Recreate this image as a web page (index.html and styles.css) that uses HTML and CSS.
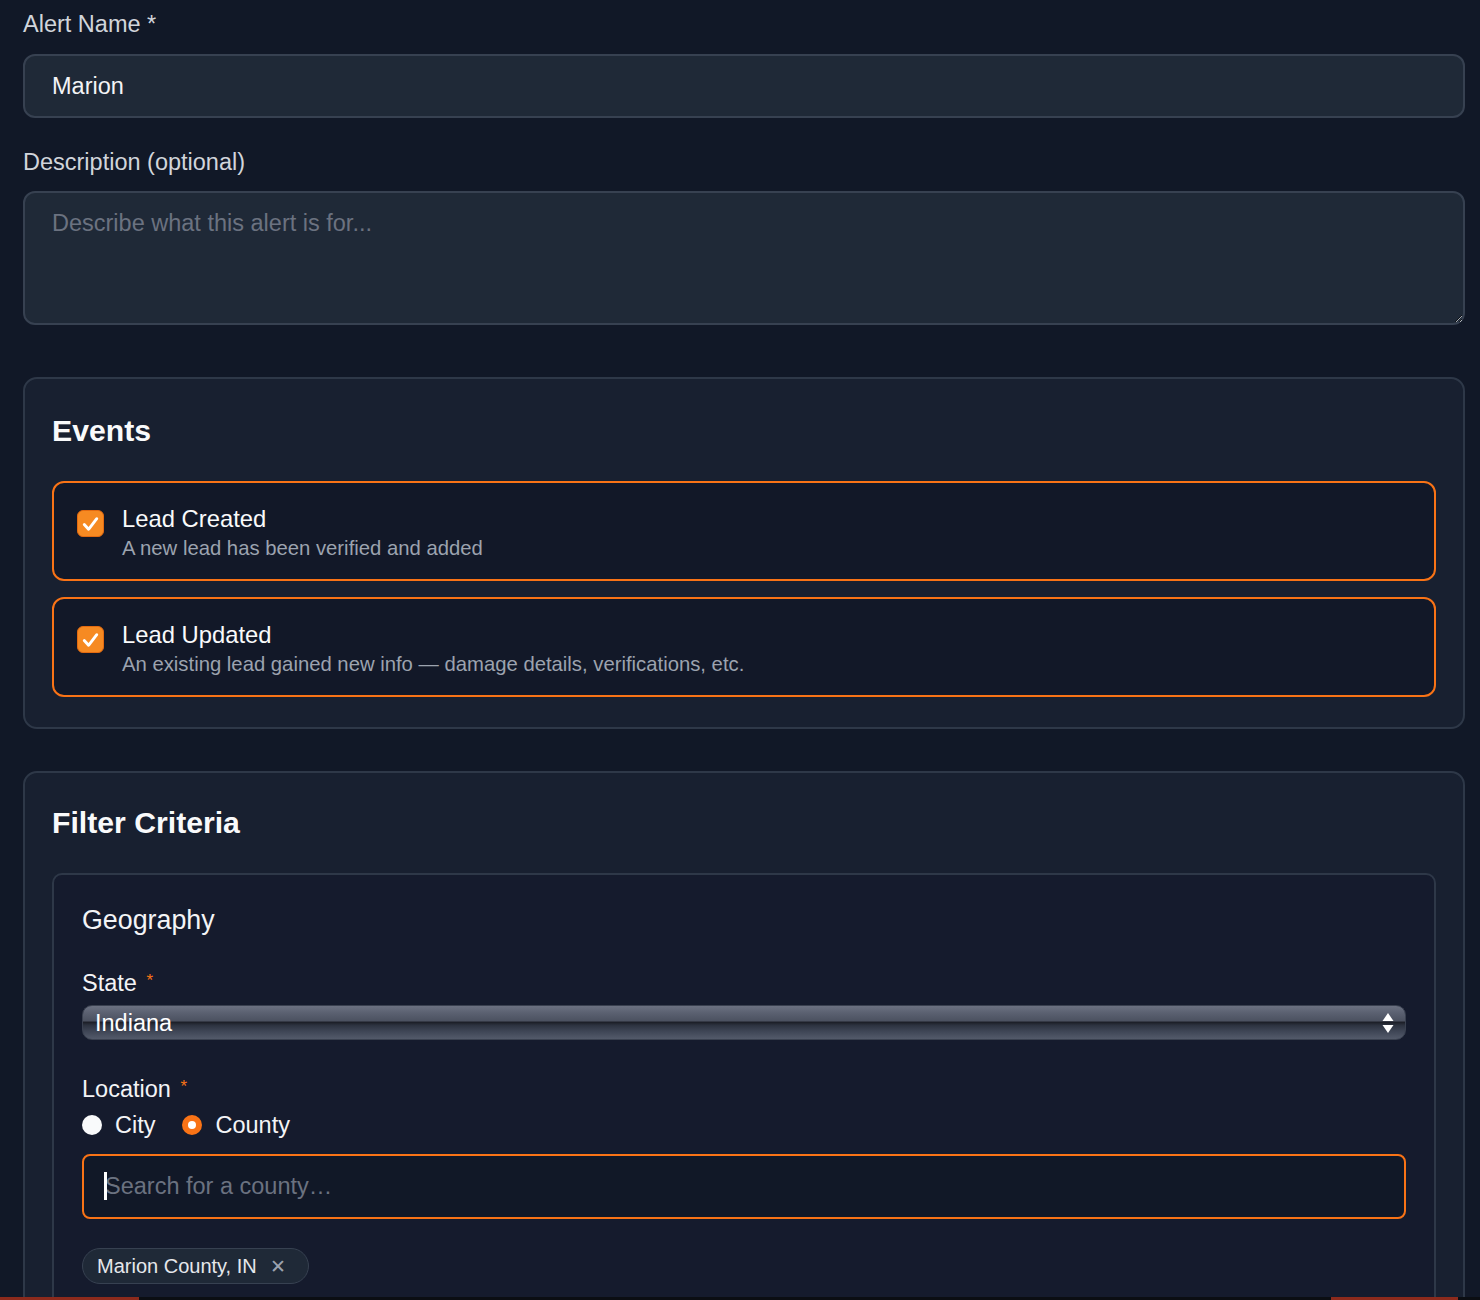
FILE: index.html
```html
<!doctype html>
<html lang="en">
<head>
<meta charset="UTF-8">
<meta name="viewport" content="width=device-width, initial-scale=1.0">
<title>Edit Alert</title>
<link rel="stylesheet" href="styles.css">
</head>
<body>
<form class="alertForm">
  <label class="fieldLabel" for="alertName">Alert Name *</label>
  <input id="alertName" class="textInput" type="text" value="Marion">

  <label class="fieldLabel descLabel" for="alertDesc">Description (optional)</label>
  <textarea id="alertDesc" class="textArea" placeholder="Describe what this alert is for..."></textarea>

  <section class="panel events">
    <h2 class="panelTitle">Events</h2>
    <div class="eventList">
      <label class="eventCard">
        <span class="checkBox"><svg viewBox="0 0 26 26" width="26" height="26"><path d="M6.5 13.5 L11 18.5 L19.5 7.5" fill="none" stroke="#fff" stroke-width="3" stroke-linecap="round" stroke-linejoin="round"/></svg></span>
        <span class="eventText">
          <span class="eventName">Lead Created</span>
          <span class="eventDesc">A new lead has been verified and added</span>
        </span>
      </label>
      <label class="eventCard">
        <span class="checkBox"><svg viewBox="0 0 26 26" width="26" height="26"><path d="M6.5 13.5 L11 18.5 L19.5 7.5" fill="none" stroke="#fff" stroke-width="3" stroke-linecap="round" stroke-linejoin="round"/></svg></span>
        <span class="eventText">
          <span class="eventName">Lead Updated</span>
          <span class="eventDesc">An existing lead gained new info — damage details, verifications, etc.</span>
        </span>
      </label>
    </div>
  </section>

  <section class="panel filters">
    <h2 class="panelTitle">Filter Criteria</h2>
    <div class="subPanel">
      <h3 class="subTitle">Geography</h3>

      <div class="geoLabel">State <span class="req">*</span></div>
      <div class="selectWrap">
        <select class="stateSel">
          <option>Indiana</option>
          <option>Illinois</option>
          <option>Ohio</option>
        </select>
        <svg class="selArrows" width="12" height="22" viewBox="0 0 12 22"><path d="M6 1 L11.5 9 L0.5 9 Z M0.5 13 L11.5 13 L6 21 Z" fill="#fff"/></svg>
      </div>

      <div class="geoLabel locLabel">Location <span class="req">*</span></div>
      <div class="radioRow">
        <label class="radioOpt"><span class="radio"></span>City</label>
        <label class="radioOpt"><span class="radio on"></span>County</label>
      </div>

      <div class="searchWrap">
        <input class="searchInput" type="text" placeholder="Search for a county…">
        <span class="caret"></span>
      </div>

      <div class="chipRow">
        <span class="chip">Marion County, IN <span class="chipX">✕</span></span>
      </div>
    </div>
  </section>
</form>

<div class="bottomBar">
  <span class="barLeft"></span>
  <span class="barRight"></span>
</div>
</body>
</html>
```

FILE: styles.css
```css
body {
    margin: 0;
    background: #111827;
    color: #e5e7eb;
    font-family: "Liberation Sans", Arial, Helvetica, sans-serif;
}
.alertForm {
    padding: 7px 15px 80px 23px;
}
.fieldLabel {
    display: block;
    font-size: 23.5px;
    line-height: 34px;
    color: #d1d5db;
    margin-bottom: 13px;
}
.descLabel {
    margin-bottom: 12px;
}
.textInput, .textArea {
    display: block;
    box-sizing: border-box;
    width: 100%;
    background: #1f2937;
    border: 2px solid #374151;
    border-radius: 12px;
    color: #f3f4f6;
    font-family: inherit;
    font-size: 23.5px;
    padding: 0 27px;
    outline: none;
}
.textInput {
    height: 64px;
    margin-bottom: 27px;
}
.textArea {
    height: 134px;
    padding-top: 13px;
    line-height: 35px;
    resize: vertical;
}
.textArea::placeholder {
    color: #6b7280;
}
.panel {
    background: #182030;
    border: 2px solid #2e3848;
    border-radius: 14px;
    padding: 30px 27px 30px 27px;
}
.events {
    margin-top: 52px;
    padding-top: 32px;
}
.filters {
    margin-top: 42px;
}
.panelTitle {
    margin: 0 0 30px 0;
    font-size: 30.2px;
    line-height: 40px;
    font-weight: bold;
    color: #f9fafb;
}
.eventList {
    display: flex;
    flex-direction: column;
    gap: 16px;
}
.eventCard {
    display: flex;
    align-items: flex-start;
    gap: 18px;
    height: 100px;
    box-sizing: border-box;
    padding: 21px 23px 17px 23px;
    background: #121828;
    border: 2px solid #f97316;
    border-radius: 12px;
}
.checkBox {
    flex: none;
    width: 27px;
    height: 27px;
    margin-top: 6px;
    background: #f68a22;
    border: 1px solid #e36a10;
    box-sizing: border-box;
    border-radius: 6px;
    display: flex;
    align-items: center;
    justify-content: center;
}
.eventText {
    display: flex;
    flex-direction: column;
}
.eventName {
    font-size: 23.8px;
    line-height: 30px;
    color: #f9fafb;
}
.eventDesc {
    font-size: 20.3px;
    line-height: 28px;
    color: #9ca3af;
}
.subPanel {
    background: #151b2d;
    border: 2px solid #2e3848;
    border-radius: 10px;
    padding: 27px 28px 40px 28px;
}
.subTitle {
    margin: 0;
    font-size: 26.8px;
    line-height: 36px;
    font-weight: normal;
    color: #f3f4f6;
}
.geoLabel {
    font-size: 23.5px;
    line-height: 34px;
    color: #f3f4f6;
    margin-top: 26px;
}
.locLabel {
    margin-top: 30px;
}
.req {
    color: #f97316;
    font-size: 17px;
    vertical-align: 5px;
    margin-left: 3px;
}
.selectWrap {
    position: relative;
    margin-top: 5px;
}
.stateSel {
    display: block;
    width: 100%;
    height: 35px;
    -webkit-appearance: none;
    appearance: none;
    border: 1.5px solid #3a4150;
    border-radius: 10px;
    padding: 0 12px;
    color: #fff;
    font-family: inherit;
    font-size: 23.5px;
    background: linear-gradient(#6b7181 0%, #5a6070 22%, #4c5261 44%, #1d2029 50%, #2c323f 58%, #3e4555 76%, #535a6a 100%);
    outline: none;
}
.selArrows {
    position: absolute;
    right: 12px;
    top: 7px;
    pointer-events: none;
}
.radioRow {
    display: flex;
    gap: 27px;
    margin-top: 2px;
    font-size: 23.5px;
    line-height: 34px;
    color: #f3f4f6;
}
.radioOpt {
    display: flex;
    align-items: center;
    gap: 13px;
}
.radio {
    width: 20px;
    height: 20px;
    border-radius: 50%;
    background: #f9fafb;
    box-sizing: border-box;
}
.radio.on {
    background: #f97316;
    border: 6.5px solid #f97316;
    position: relative;
}
.radio.on::after {
    content: "";
    position: absolute;
    inset: 0;
    border-radius: 50%;
    background: #fff;
}
.searchWrap {
    position: relative;
    margin-top: 12px;
}
.searchInput {
    display: block;
    box-sizing: border-box;
    width: 100%;
    height: 65px;
    background: #111827;
    border: 2px solid #f97316;
    border-radius: 8px;
    padding: 0 21px;
    color: #f3f4f6;
    font-family: inherit;
    font-size: 23.5px;
    outline: none;
}
.searchInput::placeholder {
    color: #6b7280;
}
.caret {
    position: absolute;
    left: 22px;
    top: 18px;
    width: 2.5px;
    height: 28px;
    background: #fff;
}
.chipRow {
    margin-top: 29px;
    display: flex;
}
.chip {
    display: inline-flex;
    align-items: center;
    gap: 13px;
    height: 36px;
    box-sizing: border-box;
    padding: 0 22px 0 14px;
    background: #1f2937;
    border: 1.5px solid #374151;
    border-radius: 18px;
    font-size: 20px;
    color: #e5e7eb;
}
.chipX {
    color: #9ca3af;
    font-size: 19px;
}
.bottomBar {
    position: fixed;
    left: 0;
    right: 0;
    bottom: 0;
    height: 3px;
    background: #0b0e13;
}
.barLeft {
    position: absolute;
    left: 0;
    top: 0;
    width: 139px;
    height: 3px;
    background: #8c2a1c;
}
.barRight {
    position: absolute;
    left: 1331px;
    top: 0;
    width: 127px;
    height: 3px;
    background: #8c2a1c;
}
```
